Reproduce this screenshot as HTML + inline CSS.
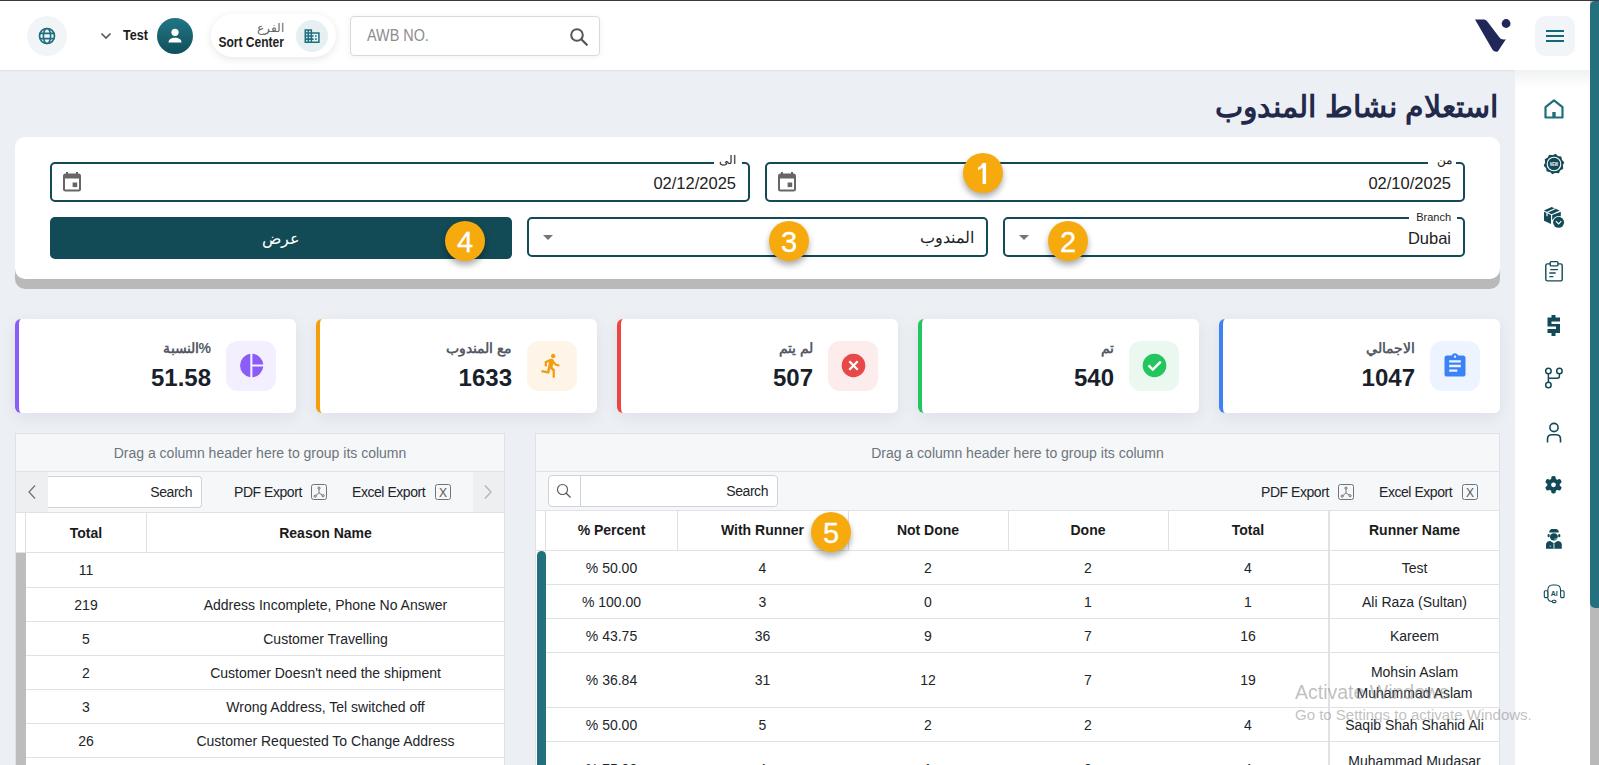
<!DOCTYPE html>
<html><head><meta charset="utf-8">
<style>
*{box-sizing:border-box;margin:0;padding:0}
html,body{width:1599px;height:765px;overflow:hidden}
body{position:relative;background:#ECEFF4;font-family:"Liberation Sans",sans-serif;color:#222}
.a{position:absolute}
.t{position:absolute;white-space:nowrap}
#topline{left:0;top:0;width:1599px;height:1px;background:#3a3a3a}
#header{left:0;top:0;width:1590px;height:70px;background:#fff;box-shadow:0 1px 2px rgba(0,0,0,.07)}
#sidebar{left:1515px;top:70px;width:75px;height:695px;background:#fff}
#sbtrack{left:1590px;top:1px;width:9px;height:764px;background:#B9B9B9}
#sbthumb{left:1590px;top:1px;width:9px;height:607px;background:#23717F;border-radius:5px 0 0 5px}
#sbgray{display:none}
.badge{width:40px;height:40px;border-radius:50%;background:#F6AA0E;color:#fff;font-size:29px;text-align:center;line-height:42px;box-shadow:0 4px 6px rgba(0,0,0,.33);-webkit-text-stroke:.3px #fff}
.g{font-size:14px;color:#212529;text-align:center}
.gb{font-size:14px;color:#1b1b1b;text-align:center;font-weight:bold}
.tb{font-size:14px;color:#212529;letter-spacing:-0.45px}
.hl{position:absolute;height:1px;background:#DEE2E6}
.vl{position:absolute;width:1px;background:#DEE2E6}
</style></head>
<body>
<div id="header" class="a">
 <div class="a" style="left:27px;top:16px;width:40px;height:40px;border-radius:50%;background:#F1F5F8"></div>
 <svg class="a" style="left:38px;top:27px" width="18" height="18" viewBox="0 0 18 18"><circle cx="9" cy="9" r="7.5" fill="none" stroke="#1E6E7E" stroke-width="1.7"/><ellipse cx="9" cy="9" rx="3.6" ry="7.5" fill="none" stroke="#1E6E7E" stroke-width="1.6"/><path d="M1.8 6.4h14.4M1.8 11.6h14.4" stroke="#1E6E7E" stroke-width="1.6"/></svg>
 <svg class="a" style="left:100px;top:32px" width="12" height="8" viewBox="0 0 12 8"><path d="M1.5 1.5L6 6l4.5-4.5" fill="none" stroke="#555" stroke-width="1.6"/></svg>
 <div class="a" style="left:123px;top:26px;font-size:15px;font-weight:bold;color:#1b1b1b;transform:scaleX(.84);transform-origin:0 0">Test</div>
 <div class="a" style="left:157px;top:18px;width:36px;height:36px;border-radius:50%;background:linear-gradient(180deg,#237585,#11505C)"></div>
 <svg class="a" style="left:165px;top:26px" width="20" height="20" viewBox="0 0 20 20"><circle cx="10" cy="6.3" r="3.6" fill="#fff"/><path d="M3.5 16.5c0-3.2 3-4.8 6.5-4.8s6.5 1.6 6.5 4.8z" fill="#fff"/></svg>
 <div class="a" style="left:211px;top:14px;width:125px;height:43px;border-radius:22px;background:#fff;box-shadow:0 2px 9px rgba(0,0,0,.10)"></div>
 <div class="a" style="left:230px;top:21px;width:54px;text-align:right;font-size:12px;color:#666">الفرع</div>
 <div class="a" style="left:184px;top:34px;width:100px;text-align:right;font-size:14px;font-weight:bold;color:#1f1f1f;transform:scaleX(.86);transform-origin:100% 0">Sort Center</div>
 <div class="a" style="left:296px;top:20px;width:32px;height:32px;border-radius:50%;background:#E6EFF2"></div>
 <svg class="a" style="left:302.8px;top:26.8px" width="18.2" height="18.2" viewBox="0 0 24 24"><path fill="#1F6F7F" d="M12 7V3H2v18h20V7H12zM6 19H4v-2h2v2zm0-4H4v-2h2v2zm0-4H4V9h2v2zm0-4H4V5h2v2zm4 12H8v-2h2v2zm0-4H8v-2h2v2zm0-4H8V9h2v2zm0-4H8V5h2v2zm10 12h-8v-2h2v-2h-2v-2h2v-2h-2V9h8v10zm-2-8h-2v2h2v-2zm0 4h-2v2h2v-2z"/></svg>
 <div class="a" style="left:350px;top:16px;width:250px;height:40px;border:1px solid #DADADA;border-radius:4px;background:#fff;box-shadow:0 1px 6px rgba(0,0,0,.06)"></div>
 <div class="a" style="left:367px;top:27px;font-size:16px;color:#8C8C8C;white-space:nowrap;transform:scaleX(.9);transform-origin:0 0">AWB NO.</div>
 <svg class="a" style="left:569px;top:27px" width="20" height="20" viewBox="0 0 20 20"><circle cx="8" cy="8" r="5.8" fill="none" stroke="#555" stroke-width="2"/><path d="M12.3 12.3l5.5 5.5" stroke="#555" stroke-width="2.2" stroke-linecap="round"/></svg>
 <svg class="a" style="left:1474px;top:18px" width="38" height="36" viewBox="0 0 38 36"><path fill="#22275A" d="M1 1.4H9.9C11.8 1.4 13 2.8 14.1 4.5L25.1 19.1C26.2 20.8 28 22 31.9 21.2L25.3 31.2C24.5 32.8 23.6 33.8 22.4 33.8C20.9 33.8 19.4 33 18.4 31.6Z"/><circle cx="32.1" cy="5.5" r="4.4" fill="#22275A"/></svg>
 <div class="a" style="left:1535px;top:16px;width:40px;height:40px;border-radius:10px;background:#F1F5F8"></div>
 <div class="a" style="left:1546px;top:30px;width:18px;height:2px;background:#13687A"></div>
 <div class="a" style="left:1546px;top:35px;width:18px;height:2px;background:#13687A"></div>
 <div class="a" style="left:1546px;top:40px;width:18px;height:2px;background:#13687A"></div>
</div>
<div id="sidebar" class="a"></div>
<div class="a" style="left:1515px;top:70px;width:75px;height:30px;background:linear-gradient(#F0F1F2,#fff 60%)"></div>
<svg class="a" style="left:1543px;top:98px" width="22" height="22" viewBox="0 0 22 22"><path d="M2.5 19.5V9.2L11 2.3l8.5 6.9v10.3z" fill="none" stroke="#1E6E7E" stroke-width="2.2" stroke-linejoin="round"/><rect x="9.3" y="14" width="3.4" height="5.5" fill="#1E6E7E"/></svg>
<svg class="a" style="left:1543px;top:153px" width="22" height="22" viewBox="0 0 22 22"><polygon points="12.52,1.42 14.77,3.60 17.86,4.14 18.40,7.23 20.58,9.48 19.20,12.30 19.64,15.40 16.87,16.87 15.40,19.64 12.30,19.20 9.48,20.58 7.23,18.40 4.14,17.86 3.60,14.77 1.42,12.52 2.80,9.70 2.36,6.60 5.13,5.13 6.60,2.36 9.70,2.80" fill="#124B57" stroke="#124B57" stroke-width="1.2" stroke-linejoin="round"/><circle cx="11" cy="11" r="6.8" fill="none" stroke="#fff" stroke-width="1.1"/><text x="11" y="13" font-size="5.6" font-family="Liberation Sans" font-weight="bold" fill="#fff" text-anchor="middle" textLength="8" lengthAdjust="spacingAndGlyphs">NEW</text></svg>
<svg class="a" style="left:1534px;top:198px" width="40" height="40" viewBox="0 0 40 40"><path fill="#124B57" d="M10 12.4L17.6 9 25.7 12.5 17.6 16.2z"/><path d="M13.3 14.2L21.4 10.6" stroke="#fff" stroke-width="1.1"/><path fill="#124B57" d="M10 13.8L17 17V25.9L10 22.8z"/><path fill="#124B57" d="M18.2 17L26.8 13.8V18.5L18.2 22z"/><rect x="12.3" y="14.6" width="1.4" height="3.6" fill="#fff" opacity=".85"/><circle cx="24.6" cy="24.3" r="6.3" fill="#fff"/><circle cx="24.6" cy="24.3" r="5.5" fill="#124B57"/><path d="M21.9 23.2l2.7 2.7 2.7-2.7" fill="none" stroke="#fff" stroke-width="1.1"/></svg>
<svg class="a" style="left:1534px;top:251px" width="40" height="40" viewBox="0 0 40 40"><path d="M16 12.9h-2.6a1.6 1.6 0 0 0-1.6 1.6v13.8a1.6 1.6 0 0 0 1.6 1.6h13.2a1.6 1.6 0 0 0 1.6-1.6V14.5a1.6 1.6 0 0 0-1.6-1.6H24" fill="none" stroke="#124B57" stroke-width="1.4"/><rect x="16.2" y="10.6" width="7.7" height="4.3" rx="1" fill="none" stroke="#124B57" stroke-width="1.4"/><path d="M16.3 18.6h7.6M15.3 22h6.4M15.3 25.6h4.1" stroke="#124B57" stroke-width="1.4"/></svg>
<svg class="a" style="left:1546px;top:315px" width="16" height="22" viewBox="0 0 16 22"><path fill="#124B57" d="M5.5 0h4v2.5H14v4H5.5v2.5H14V18H9.5v3h-4v-3H1.5v-4h8.5v-2.5H1.5V2.5h4z"/></svg>
<svg class="a" style="left:1534px;top:358px" width="40" height="40" viewBox="0 0 40 40"><circle cx="14.4" cy="13.1" r="2.75" fill="none" stroke="#124B57" stroke-width="1.5"/><circle cx="25.4" cy="13.1" r="2.75" fill="none" stroke="#124B57" stroke-width="1.5"/><circle cx="14.4" cy="26.9" r="2.75" fill="none" stroke="#124B57" stroke-width="1.5"/><path d="M14.4 15.9v8.2M25.4 15.9v2.4c0 1.2-.7 1.9-1.9 1.9h-9.1" fill="none" stroke="#124B57" stroke-width="1.5"/></svg>
<svg class="a" style="left:1545px;top:422px" width="18" height="22" viewBox="0 0 18 22"><circle cx="9" cy="5.5" r="4.1" fill="none" stroke="#124B57" stroke-width="1.6"/><path d="M2.5 20.5v-3.5c0-2.5 1.8-4.2 4.5-4.2h4c2.7 0 4.5 1.7 4.5 4.2v3.5" fill="none" stroke="#124B57" stroke-width="1.6"/></svg>
<svg class="a" style="left:1534px;top:465px" width="40" height="40" viewBox="0 0 40 40"><circle cx="19.5" cy="19.8" r="6.3" fill="#124B57"/><rect x="17.2" y="11.1" width="4.6" height="6" rx="1.8" fill="#124B57" transform="rotate(0 19.5 19.8)"/><rect x="17.2" y="11.1" width="4.6" height="6" rx="1.8" fill="#124B57" transform="rotate(60 19.5 19.8)"/><rect x="17.2" y="11.1" width="4.6" height="6" rx="1.8" fill="#124B57" transform="rotate(120 19.5 19.8)"/><rect x="17.2" y="11.1" width="4.6" height="6" rx="1.8" fill="#124B57" transform="rotate(180 19.5 19.8)"/><rect x="17.2" y="11.1" width="4.6" height="6" rx="1.8" fill="#124B57" transform="rotate(240 19.5 19.8)"/><rect x="17.2" y="11.1" width="4.6" height="6" rx="1.8" fill="#124B57" transform="rotate(300 19.5 19.8)"/><circle cx="19.5" cy="19.8" r="2.4" fill="#fff"/></svg>
<svg class="a" style="left:1534px;top:520px" width="40" height="40" viewBox="0 0 40 40"><path fill="#124B57" d="M15.2 12.6C15.2 10 16.5 8.9 18 8.9H22C23.5 8.9 24.8 10 24.8 12.6Z"/><ellipse cx="19.9" cy="16.8" rx="3.9" ry="3.6" fill="#124B57"/><rect x="13.6" y="13.9" width="2.1" height="3.3" rx="1" fill="#124B57"/><rect x="24.2" y="13.9" width="2.1" height="3.3" rx="1" fill="#124B57"/><path d="M24.6 17.4c-.5 1.3-2 1.8-4.2 1.7" fill="none" stroke="#fff" stroke-width=".7"/><path fill="#124B57" d="M12 28.8V24.6C12 22.4 13.6 21.1 16.2 20.9L19.9 23.2 23.6 20.9C26.2 21.1 27.8 22.4 27.8 24.6V28.8Z"/><rect x="19.4" y="23.4" width="1.1" height="5.4" fill="#fff" opacity=".8"/><rect x="15.6" y="25.6" width="1.6" height="1" fill="#fff" opacity=".7"/></svg>
<svg class="a" style="left:1543px;top:583px" width="22" height="22" viewBox="0 0 22 22"><path d="M4.8 14V7.5C4.8 4 6.5 2 9.5 2H13C16 2 17.6 4 17.6 7.5V14" fill="none" stroke="#124B57" stroke-width="1.1"/><rect x="1.3" y="7.8" width="3.5" height="6.8" rx="1" fill="#fff" stroke="#124B57" stroke-width="1.1"/><rect x="17.6" y="7.8" width="3.5" height="6.8" rx="1" fill="#fff" stroke="#124B57" stroke-width="1.1"/><path d="M4.8 14.6c0 2.5 1.8 3.9 4.3 3.9" fill="none" stroke="#124B57" stroke-width="1.1"/><rect x="9.2" y="17.3" width="3.8" height="2.3" rx="1.1" fill="#fff" stroke="#124B57" stroke-width="1.1"/><text x="11.2" y="12.8" font-size="7" font-family="Liberation Sans" fill="#124B57" text-anchor="middle" font-weight="bold">AI</text></svg>

<div class="t" style="left:1100px;top:82px;width:398px;text-align:right;font-size:30px;font-weight:bold;color:#22294A;line-height:50px" dir="rtl">استعلام نشاط المندوب</div>
<div class="a" style="left:15px;top:137px;width:1485px;height:142px;background:#fff;border-radius:10px;box-shadow:0 10px 0 #B9B9B9"></div>
<div class="a" style="left:765px;top:162px;width:700px;height:40px;border:2px solid #124A56;border-radius:5px"></div>
<div class="a" style="left:1428px;top:158px;width:28px;height:8px;background:#fff"></div>
<div class="t" style="left:1420px;top:153px;width:32px;text-align:right;font-size:12px;color:#222" dir="rtl">من</div>
<div class="t" style="left:1300px;top:174px;width:151px;text-align:right;font-size:16.5px;color:#222">02/10/2025</div>
<svg class="a" style="left:777px;top:171px" width="20" height="22" viewBox="0 0 20 22"><path d="M5 1v3M15 1v3" stroke="#666" stroke-width="2"/><rect x="2" y="3.5" width="16" height="16" rx="1.5" fill="none" stroke="#666" stroke-width="2"/><rect x="2" y="3.5" width="16" height="4" fill="#666"/><rect x="10.6" y="11.5" width="4.6" height="4.6" fill="#666"/></svg>
<div class="a" style="left:50px;top:162px;width:700px;height:40px;border:2px solid #124A56;border-radius:5px"></div>
<div class="a" style="left:714px;top:158px;width:28px;height:8px;background:#fff"></div>
<div class="t" style="left:700px;top:153px;width:36px;text-align:right;font-size:12px;color:#222" dir="rtl">الى</div>
<div class="t" style="left:585px;top:174px;width:151px;text-align:right;font-size:16.5px;color:#222">02/12/2025</div>
<svg class="a" style="left:62px;top:171px" width="20" height="22" viewBox="0 0 20 22"><path d="M5 1v3M15 1v3" stroke="#666" stroke-width="2"/><rect x="2" y="3.5" width="16" height="16" rx="1.5" fill="none" stroke="#666" stroke-width="2"/><rect x="2" y="3.5" width="16" height="4" fill="#666"/><rect x="10.6" y="11.5" width="4.6" height="4.6" fill="#666"/></svg>
<div class="a" style="left:1003px;top:217px;width:462px;height:40px;border:2px solid #124A56;border-radius:5px"></div>
<div class="a" style="left:1409px;top:213px;width:48px;height:8px;background:#fff"></div>
<div class="t" style="left:1380px;top:211px;width:71px;text-align:right;font-size:11px;color:#222">Branch</div>
<div class="t" style="left:1300px;top:229px;width:151px;text-align:right;font-size:16.5px;color:#222">Dubai</div>
<svg class="a" style="left:1018px;top:234px" width="12" height="7" viewBox="0 0 12 7"><path d="M1 1h10L6 6z" fill="#757575"/></svg>
<div class="a" style="left:527px;top:217px;width:461px;height:40px;border:2px solid #124A56;border-radius:5px"></div>
<div class="t" style="left:800px;top:228px;width:174px;text-align:right;font-size:16px;color:#222" dir="rtl">المندوب</div>
<svg class="a" style="left:542px;top:234px" width="12" height="7" viewBox="0 0 12 7"><path d="M1 1h10L6 6z" fill="#757575"/></svg>
<div class="t" style="left:50px;top:217px;width:462px;height:42px;border-radius:5px;background:#124A56;color:#fff;text-align:center;font-size:16px;line-height:43px">عرض</div>
<div class="a" style="left:1219px;top:319px;width:281px;height:94px;background:#fff;border-radius:6px;border-left:4px solid #3B82F6;box-shadow:0 4px 16px rgba(30,40,60,.07)"></div>
<div class="a" style="left:1430px;top:341px;width:50px;height:50px;border-radius:12px;background:#EEF4FF"></div>
<svg class="a" style="left:1441px;top:352px" width="28" height="28" viewBox="0 0 24 24"><path fill="#3B82F6" d="M19 3h-4.18C14.4 1.84 13.3 1 12 1c-1.3 0-2.4.84-2.82 2H5c-1.1 0-2 .9-2 2v14c0 1.1.9 2 2 2h14c1.1 0 2-.9 2-2V5c0-1.1-.9-2-2-2zm-7 0c.55 0 1 .45 1 1s-.45 1-1 1-1-.45-1-1 .45-1 1-1zm2 14H7v-2h7v2zm3-4H7v-2h10v2zm0-4H7V7h10v2z"/></svg>
<div class="t" style="left:1269px;top:340px;width:146px;text-align:right;font-size:14px;font-weight:bold;color:#555B66" dir="rtl">الاجمالي</div>
<div class="t" style="left:1269px;top:364px;width:146px;text-align:right;font-size:24px;font-weight:bold;color:#1A1F2C">1047</div>
<div class="a" style="left:918px;top:319px;width:281px;height:94px;background:#fff;border-radius:6px;border-left:4px solid #22C55E;box-shadow:0 4px 16px rgba(30,40,60,.07)"></div>
<div class="a" style="left:1129px;top:341px;width:50px;height:50px;border-radius:12px;background:#EAF8EF"></div>
<svg class="a" style="left:1142px;top:353px" width="25" height="25" viewBox="0 0 25 25"><circle cx="12.5" cy="12.5" r="11.8" fill="#22C55E"/><path d="M6.5 12.3l4.3 4.3 8-8" fill="none" stroke="#fff" stroke-width="2.4"/></svg>
<div class="t" style="left:968px;top:340px;width:146px;text-align:right;font-size:14px;font-weight:bold;color:#555B66" dir="rtl">تم</div>
<div class="t" style="left:968px;top:364px;width:146px;text-align:right;font-size:24px;font-weight:bold;color:#1A1F2C">540</div>
<div class="a" style="left:617px;top:319px;width:281px;height:94px;background:#fff;border-radius:6px;border-left:4px solid #EF4444;box-shadow:0 4px 16px rgba(30,40,60,.07)"></div>
<div class="a" style="left:828px;top:341px;width:50px;height:50px;border-radius:12px;background:#FDECEC"></div>
<svg class="a" style="left:841px;top:353px" width="25" height="25" viewBox="0 0 25 25"><circle cx="12.5" cy="12.5" r="11.8" fill="#E94848"/><path d="M8.3 8.3l8.4 8.4M16.7 8.3l-8.4 8.4" stroke="#fff" stroke-width="2.3"/></svg>
<div class="t" style="left:667px;top:340px;width:146px;text-align:right;font-size:14px;font-weight:bold;color:#555B66" dir="rtl">لم يتم</div>
<div class="t" style="left:667px;top:364px;width:146px;text-align:right;font-size:24px;font-weight:bold;color:#1A1F2C">507</div>
<div class="a" style="left:316px;top:319px;width:281px;height:94px;background:#fff;border-radius:6px;border-left:4px solid #F59E0B;box-shadow:0 4px 16px rgba(30,40,60,.07)"></div>
<div class="a" style="left:527px;top:341px;width:50px;height:50px;border-radius:12px;background:#FEF5E8"></div>
<svg class="a" style="left:538px;top:352px" width="27" height="27" viewBox="0 0 24 24"><path fill="#F39C12" d="M13.49 5.48c1.1 0 2-.9 2-2s-.9-2-2-2-2 .9-2 2 .9 2 2 2zm-3.6 13.9l1-4.4 2.1 2v6h2v-7.5l-2.1-2 .6-3c1.3 1.5 3.3 2.5 5.5 2.5v-2c-1.9 0-3.5-1-4.3-2.4l-1-1.6c-.4-.6-1-1-1.7-1-.3 0-.5.1-.8.1l-5.2 2.2v4.7h2v-3.4l1.8-.7-1.6 8.1-4.9-1-.4 2 7 1.4z"/></svg>
<div class="t" style="left:366px;top:340px;width:146px;text-align:right;font-size:14px;font-weight:bold;color:#555B66" dir="rtl">مع المندوب</div>
<div class="t" style="left:366px;top:364px;width:146px;text-align:right;font-size:24px;font-weight:bold;color:#1A1F2C">1633</div>
<div class="a" style="left:15px;top:319px;width:281px;height:94px;background:#fff;border-radius:6px;border-left:4px solid #8B5CF6;box-shadow:0 4px 16px rgba(30,40,60,.07)"></div>
<div class="a" style="left:226px;top:341px;width:50px;height:50px;border-radius:12px;background:#F3EFFE"></div>
<svg class="a" style="left:239px;top:353px" width="25" height="25" viewBox="0 0 25 25"><path fill="#8B5CF6" d="M11.3.8v23.4A11.8 11.8 0 0 1 11.3.8zM13.4.8a11.8 11.8 0 0 1 10.9 10.7H13.4zM13.4 13.6h10.9a11.8 11.8 0 0 1-10.9 10.6z"/></svg>
<div class="t" style="left:65px;top:340px;width:146px;text-align:right;font-size:14px;font-weight:bold;color:#555B66" dir="rtl">%النسبة</div>
<div class="t" style="left:65px;top:364px;width:146px;text-align:right;font-size:24px;font-weight:bold;color:#1A1F2C">51.58</div>
<div class="a" style="left:15px;top:433px;width:490px;height:332px;background:#fff;border:1px solid #DEE2E6;border-bottom:none"></div>
<div class="a" style="left:16px;top:434px;width:488px;height:38px;background:#F6F7F9;border-bottom:1px solid #DEE2E6"></div>
<div class="t g" style="left:16px;top:445px;width:488px;color:#6C757D">Drag a column header here to group its column</div>
<div class="a" style="left:16px;top:472px;width:488px;height:41px;background:#F6F7F9;border-bottom:1px solid #DEE2E6"></div>
<div class="a" style="left:16px;top:472px;width:32px;height:40px;background:#EDEFF1"></div>
<svg class="a" style="left:26px;top:484px" width="12" height="16" viewBox="0 0 12 16"><path d="M9 1.5L3 8l6 6.5" fill="none" stroke="#6C757D" stroke-width="1.3"/></svg>
<div class="a" style="left:473px;top:472px;width:31px;height:40px;background:#EDEFF1"></div>
<svg class="a" style="left:482px;top:484px" width="12" height="16" viewBox="0 0 12 16"><path d="M3 1.5L9 8l-6 6.5" fill="none" stroke="#ADB5BD" stroke-width="1.3"/></svg>
<div class="a" style="left:48px;top:476px;width:154px;height:32px;background:#fff;border:1px solid #CED4DA;border-left:none;border-radius:0 4px 4px 0"></div>
<div class="t tb" style="left:100px;top:484px;width:92px;text-align:right">Search</div>
<div class="t tb" style="left:234px;top:484px">PDF Export</div>
<svg class="a" style="left:311px;top:484px" width="16" height="16" viewBox="0 0 16 16"><rect x=".5" y=".5" width="15" height="15" rx="2" fill="none" stroke="#6B7580" stroke-width="1"/><path d="M8 5.2V8.8L4.9 11.6M8 8.8l3.2 2.3" fill="none" stroke="#555" stroke-width=".8"/><circle cx="8" cy="4.1" r="1.1" fill="none" stroke="#555" stroke-width=".8"/><circle cx="4.2" cy="12.2" r="1.1" fill="none" stroke="#555" stroke-width=".8"/><circle cx="12.1" cy="11.7" r="1.1" fill="none" stroke="#555" stroke-width=".8"/></svg>
<div class="t tb" style="left:352px;top:484px">Excel Export</div>
<svg class="a" style="left:435px;top:484px" width="16" height="16" viewBox="0 0 16 16"><rect x=".5" y=".5" width="15" height="15" rx="2" fill="none" stroke="#6B7580" stroke-width="1"/><text x="8" y="12.6" font-size="12" font-family="Liberation Sans" fill="#555" text-anchor="middle">X</text></svg>
<div class="vl" style="left:25px;top:513px;height:39px"></div>
<div class="vl" style="left:146px;top:513px;height:39px"></div>
<div class="hl" style="left:16px;top:552px;width:488px"></div>
<div class="t gb" style="left:26px;top:525px;width:120px">Total</div>
<div class="t gb" style="left:147px;top:525px;width:357px">Reason Name</div>
<div class="a" style="left:16px;top:553px;width:10px;height:212px;background:#BDBDBD"></div>
<div class="hl" style="left:26px;top:587px;width:478px"></div>
<div class="t g" style="left:26px;top:562px;width:120px">11</div>
<div class="t g" style="left:147px;top:562px;width:357px"></div>
<div class="hl" style="left:26px;top:621px;width:478px"></div>
<div class="t g" style="left:26px;top:597px;width:120px">219</div>
<div class="t g" style="left:147px;top:597px;width:357px">Address Incomplete, Phone No Answer</div>
<div class="hl" style="left:26px;top:655px;width:478px"></div>
<div class="t g" style="left:26px;top:631px;width:120px">5</div>
<div class="t g" style="left:147px;top:631px;width:357px">Customer Travelling</div>
<div class="hl" style="left:26px;top:689px;width:478px"></div>
<div class="t g" style="left:26px;top:665px;width:120px">2</div>
<div class="t g" style="left:147px;top:665px;width:357px">Customer Doesn't need the shipment</div>
<div class="hl" style="left:26px;top:723px;width:478px"></div>
<div class="t g" style="left:26px;top:699px;width:120px">3</div>
<div class="t g" style="left:147px;top:699px;width:357px">Wrong Address, Tel switched off</div>
<div class="hl" style="left:26px;top:757px;width:478px"></div>
<div class="t g" style="left:26px;top:733px;width:120px">26</div>
<div class="t g" style="left:147px;top:733px;width:357px">Customer Requested To Change Address</div>
<div class="hl" style="left:26px;top:791px;width:478px"></div>
<div class="t g" style="left:26px;top:767px;width:120px"></div>
<div class="t g" style="left:147px;top:767px;width:357px"></div>
<div class="a" style="left:535px;top:433px;width:965px;height:332px;background:#fff;border:1px solid #DEE2E6;border-bottom:none"></div>
<div class="a" style="left:536px;top:434px;width:963px;height:38px;background:#F6F7F9;border-bottom:1px solid #DEE2E6"></div>
<div class="t g" style="left:536px;top:445px;width:963px;color:#6C757D">Drag a column header here to group its column</div>
<div class="a" style="left:536px;top:472px;width:963px;height:39px;background:#F6F7F9;border-bottom:1px solid #DEE2E6"></div>
<div class="a" style="left:548px;top:475px;width:230px;height:32px;background:#fff;border:1px solid #CED4DA;border-radius:4px"></div>
<div class="vl" style="left:580px;top:476px;height:30px;background:#CED4DA"></div>
<svg class="a" style="left:556px;top:483px" width="16" height="16" viewBox="0 0 16 16"><circle cx="6.5" cy="6.5" r="5" fill="none" stroke="#555" stroke-width="1.1"/><path d="M10 10l4.5 4.5" stroke="#555" stroke-width="1.3"/></svg>
<div class="t tb" style="left:600px;top:483px;width:168px;text-align:right">Search</div>
<div class="t tb" style="left:1261px;top:484px">PDF Export</div>
<svg class="a" style="left:1338px;top:484px" width="16" height="16" viewBox="0 0 16 16"><rect x=".5" y=".5" width="15" height="15" rx="2" fill="none" stroke="#6B7580" stroke-width="1"/><path d="M8 5.2V8.8L4.9 11.6M8 8.8l3.2 2.3" fill="none" stroke="#555" stroke-width=".8"/><circle cx="8" cy="4.1" r="1.1" fill="none" stroke="#555" stroke-width=".8"/><circle cx="4.2" cy="12.2" r="1.1" fill="none" stroke="#555" stroke-width=".8"/><circle cx="12.1" cy="11.7" r="1.1" fill="none" stroke="#555" stroke-width=".8"/></svg>
<div class="t tb" style="left:1379px;top:484px">Excel Export</div>
<svg class="a" style="left:1462px;top:484px" width="16" height="16" viewBox="0 0 16 16"><rect x=".5" y=".5" width="15" height="15" rx="2" fill="none" stroke="#6B7580" stroke-width="1"/><text x="8" y="12.6" font-size="12" font-family="Liberation Sans" fill="#555" text-anchor="middle">X</text></svg>
<div class="vl" style="left:545px;top:511px;height:39px"></div>
<div class="t gb" style="left:546px;top:522px;width:131px">% Percent</div>
<div class="t gb" style="left:677px;top:522px;width:171px">With Runner</div>
<div class="t gb" style="left:848px;top:522px;width:160px">Not Done</div>
<div class="t gb" style="left:1008px;top:522px;width:160px">Done</div>
<div class="t gb" style="left:1168px;top:522px;width:160px">Total</div>
<div class="t gb" style="left:1330px;top:522px;width:169px">Runner Name</div>
<div class="vl" style="left:677px;top:511px;height:39px"></div>
<div class="vl" style="left:848px;top:511px;height:39px"></div>
<div class="vl" style="left:1008px;top:511px;height:39px"></div>
<div class="vl" style="left:1168px;top:511px;height:39px"></div>
<div class="hl" style="left:536px;top:550px;width:963px"></div>
<div class="a" style="left:1328px;top:511px;width:2px;height:254px;background:#DEE2E6"></div>
<div class="a" style="left:537px;top:551px;width:9px;height:214px;background:#23717F;border-radius:5px 5px 0 0"></div>
<div class="hl" style="left:546px;top:584px;width:953px"></div>
<div class="t g" style="left:546px;top:560px;width:131px">% 50.00</div>
<div class="t g" style="left:677px;top:560px;width:171px">4</div>
<div class="t g" style="left:848px;top:560px;width:160px">2</div>
<div class="t g" style="left:1008px;top:560px;width:160px">2</div>
<div class="t g" style="left:1168px;top:560px;width:160px">4</div>
<div class="t g" style="left:1330px;top:560px;width:169px">Test</div>
<div class="hl" style="left:546px;top:618px;width:953px"></div>
<div class="t g" style="left:546px;top:594px;width:131px">% 100.00</div>
<div class="t g" style="left:677px;top:594px;width:171px">3</div>
<div class="t g" style="left:848px;top:594px;width:160px">0</div>
<div class="t g" style="left:1008px;top:594px;width:160px">1</div>
<div class="t g" style="left:1168px;top:594px;width:160px">1</div>
<div class="t g" style="left:1330px;top:594px;width:169px">Ali Raza (Sultan)</div>
<div class="hl" style="left:546px;top:652px;width:953px"></div>
<div class="t g" style="left:546px;top:628px;width:131px">% 43.75</div>
<div class="t g" style="left:677px;top:628px;width:171px">36</div>
<div class="t g" style="left:848px;top:628px;width:160px">9</div>
<div class="t g" style="left:1008px;top:628px;width:160px">7</div>
<div class="t g" style="left:1168px;top:628px;width:160px">16</div>
<div class="t g" style="left:1330px;top:628px;width:169px">Kareem</div>
<div class="hl" style="left:546px;top:707px;width:953px"></div>
<div class="t g" style="left:546px;top:672px;width:131px">% 36.84</div>
<div class="t g" style="left:677px;top:672px;width:171px">31</div>
<div class="t g" style="left:848px;top:672px;width:160px">12</div>
<div class="t g" style="left:1008px;top:672px;width:160px">7</div>
<div class="t g" style="left:1168px;top:672px;width:160px">19</div>
<div class="t g" style="left:1330px;top:662px;width:169px;line-height:21px">Mohsin Aslam<br>Muhammad Aslam</div>
<div class="hl" style="left:546px;top:741px;width:953px"></div>
<div class="t g" style="left:546px;top:717px;width:131px">% 50.00</div>
<div class="t g" style="left:677px;top:717px;width:171px">5</div>
<div class="t g" style="left:848px;top:717px;width:160px">2</div>
<div class="t g" style="left:1008px;top:717px;width:160px">2</div>
<div class="t g" style="left:1168px;top:717px;width:160px">4</div>
<div class="t g" style="left:1330px;top:717px;width:169px">Saqib Shah Shahid Ali</div>
<div class="hl" style="left:546px;top:796px;width:953px"></div>
<div class="t g" style="left:546px;top:761px;width:131px">% 75.00</div>
<div class="t g" style="left:677px;top:761px;width:171px">4</div>
<div class="t g" style="left:848px;top:761px;width:160px">1</div>
<div class="t g" style="left:1008px;top:761px;width:160px">3</div>
<div class="t g" style="left:1168px;top:761px;width:160px">4</div>
<div class="t g" style="left:1330px;top:751px;width:169px;line-height:21px">Muhammad Mudasar<br>x</div>
<div class="t" style="left:1295px;top:681px;font-size:19.5px;color:rgba(130,130,130,.5)">Activate Windows</div>
<div class="t" style="left:1295px;top:706px;font-size:15px;color:rgba(130,130,130,.5)">Go to Settings to activate Windows.</div>
<div class="a badge" style="left:963px;top:153px"><svg class="a" style="left:0;top:0" width="40" height="40" viewBox="0 0 40 40"><path fill="#fff" d="M19.6 9.9H23.1V30.9H19.6V14.6C18.3 15.8 16.7 16.6 15 17.2V14.4C17 13.6 18.6 12 19.6 9.9Z"/></svg></div>
<div class="a badge" style="left:1048px;top:221px">2</div>
<div class="a badge" style="left:769px;top:221px">3</div>
<div class="a badge" style="left:445px;top:221px">4</div>
<div class="a badge" style="left:811px;top:512px">5</div>
<div id="sbtrack" class="a"></div>
<div id="sbthumb" class="a"></div>
<div id="sbgray" class="a"></div>
<div id="topline" class="a"></div>
</body></html>
